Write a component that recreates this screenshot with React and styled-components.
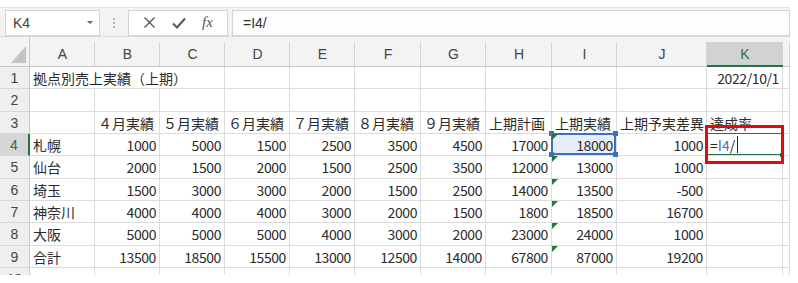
import React from 'react';
import styled, { createGlobalStyle, css } from 'styled-components';

const GlobalStyle = createGlobalStyle`
  body {
    margin: 0;
    background: #ffffff;
    font-family: "Noto Sans CJK JP", "Noto Sans", sans-serif;
  }
`;

const colWidths = [30, 65, 65, 65, 65, 65, 66, 65, 66, 65, 90, 76, 7];
const rowHeights = [22, 23, 22, 22, 23, 22, 22, 23, 22, 22];
const letters = ['A', 'B', 'C', 'D', 'E', 'F', 'G', 'H', 'I', 'J', 'K', ''];

const rows = [
  ['札幌', 1000, 5000, 1500, 2500, 3500, 4500, 17000, 18000, 1000],
  ['仙台', 2000, 1500, 2000, 1500, 2500, 3500, 12000, 13000, 1000],
  ['埼玉', 1500, 3000, 3000, 2000, 1500, 2500, 14000, 13500, -500],
  ['神奈川', 4000, 4000, 4000, 3000, 2000, 1500, 1800, 18500, 16700],
  ['大阪', 5000, 5000, 5000, 4000, 3000, 2000, 23000, 24000, 1000],
  ['合計', 13500, 18500, 15500, 13000, 12500, 14000, 67800, 87000, 19200]
];

const headings = ['', '４月実績', '５月実績', '６月実績', '７月実績', '８月実績', '９月実績', '上期計画', '上期実績', '上期予実差異', '達成率'];

const Page = styled.div`
  width: 790px;
  padding-top: 7px;
`;

const Toolbar = styled.div`
  display: flex;
  align-items: center;
  height: 30px;
  box-sizing: border-box;
  background: #f3f3f3;
  border-top: 1px solid #e4e4e4;
  border-bottom: 1px solid #dadada;
  padding: 2px 0 1px 5px;
`;

const NameBox = styled.div`
  display: flex;
  align-items: center;
  justify-content: space-between;
  width: 95px;
  height: 26px;
  box-sizing: border-box;
  background: #ffffff;
  border: 1px solid #d4d4d4;
  padding: 0 6px 0 7px;
  font-family: "Liberation Sans", Arial, sans-serif;
  font-size: 14px;
  color: #444;
`;

const Caret = styled.span`
  width: 0;
  height: 0;
  border-left: 3px solid transparent;
  border-right: 3px solid transparent;
  border-top: 3px solid #666;
`;

const Dots = styled.div`
  display: flex;
  flex-direction: column;
  gap: 2px;
  width: 28px;
  align-items: center;
  span {
    width: 2px;
    height: 2px;
    background: #b8b8b8;
  }
`;

const FxBox = styled.div`
  display: flex;
  align-items: center;
  justify-content: space-around;
  width: 100px;
  height: 26px;
  box-sizing: border-box;
  background: #ffffff;
  border: 1px solid #d4d4d4;
  padding: 0 6px;
  color: #555;
`;

const FxText = styled.span`
  font-family: "Liberation Serif", "Times New Roman", serif;
  font-style: italic;
  font-size: 15px;
  color: #555;
`;

const FormulaInput = styled.div`
  flex: 1;
  margin-left: 4px;
  height: 26px;
  box-sizing: border-box;
  background: #fdfdfd;
  border: 1px solid #d4d4d4;
  padding-left: 10px;
  display: flex;
  align-items: center;
  font-family: "Liberation Sans", Arial, sans-serif;
  font-size: 14px;
  color: #333;
`;

const Sheet = styled.div`
  height: 238px;
  overflow: hidden;
  background: #f3f3f3;
`;

const Grid = styled.div`
  display: grid;
  grid-template-columns: ${colWidths.map((w) => w + 'px').join(' ')};
  grid-template-rows: 30px ${rowHeights.map((h) => h + 'px').join(' ')};
`;

const Corner = styled.div`
  position: relative;
  background: #f3f3f3;
  border-right: 1px solid #c8c8c8;
  border-bottom: 1px solid #c8c8c8;
  &::after {
    content: '';
    position: absolute;
    right: 3px;
    bottom: 3px;
    border-left: 15px solid transparent;
    border-bottom: 17px solid #c4c4c4;
  }
`;

const ColHead = styled.div`
  position: relative;
  display: flex;
  align-items: center;
  justify-content: center;
  padding-top: 5px;
  box-sizing: border-box;
  background: #f3f3f3;
  border-bottom: 1px solid #c8c8c8;
  font-family: "Liberation Sans", Arial, sans-serif;
  font-size: 14px;
  color: #444;
  &::after {
    content: '';
    position: absolute;
    right: 0;
    top: 5px;
    bottom: 0;
    width: 1px;
    background: #d4d4d4;
  }
  ${(p) =>
    p.$active &&
    css`
      background: linear-gradient(#f3f3f3 5px, #d2d2d2 5px);
      border-bottom: 2px solid #217346;
      color: #217346;
    `}
`;

const RowHead = styled.div`
  display: flex;
  align-items: center;
  justify-content: center;
  box-sizing: border-box;
  background: #efefef;
  border-right: 1px solid #c8c8c8;
  border-bottom: 1px solid #d8d8d8;
  font-family: "Liberation Sans", Arial, sans-serif;
  font-size: 14px;
  color: #444;
  ${(p) =>
    p.$active &&
    css`
      background: #d6d6d6;
      border-right: 2px solid #217346;
      color: #217346;
    `}
`;

const Cell = styled.div`
  position: relative;
  display: flex;
  align-items: center;
  justify-content: ${(p) => (p.$num ? 'flex-end' : 'flex-start')};
  box-sizing: border-box;
  padding: 0 3px 0 3px;
  background: ${(p) => (p.$picked ? '#e8eef9' : '#ffffff')};
  border-right: 1px solid #dcdcdc;
  border-bottom: 1px solid #dcdcdc;
  font-size: 14px;
  letter-spacing: ${(p) => (p.$num ? '-0.4px' : '0')};
  color: #2b2b2b;
  white-space: nowrap;
  overflow: visible;
  ${(p) => p.$span && css`grid-column: span ${p.$span};`}
`;

const ErrorMark = styled.span`
  position: absolute;
  z-index: 3;
  left: 0;
  top: 0;
  border-right: 6px solid transparent;
  border-top: 6px solid #1e7b34;
`;

const RefFrame = styled.span`
  position: absolute;
  z-index: 2;
  left: -1px;
  top: -1px;
  right: 0;
  bottom: 0;
  border: 2px solid #3f6fc6;
  pointer-events: none;
`;

const Handle = styled.span`
  position: absolute;
  width: 5px;
  height: 5px;
  background: #3f6fc6;
  ${(p) => (p.$top ? 'top: -4px;' : 'bottom: -4px;')}
  ${(p) => (p.$left ? 'left: -4px;' : 'right: -4px;')}
`;

const EditFrame = styled.span`
  position: absolute;
  z-index: 2;
  left: -1px;
  top: -1px;
  right: 0;
  bottom: 0;
  border: 1px solid #217346;
  &::after {
    content: '';
    position: absolute;
    right: -3px;
    bottom: -3px;
    width: 4px;
    height: 4px;
    background: #217346;
  }
`;

const RedBox = styled.span`
  position: absolute;
  z-index: 4;
  left: -2px;
  top: -9px;
  width: 79px;
  height: 39px;
  box-sizing: border-box;
  border: 3px solid #e8080a;
`;

const RefText = styled.span`
  color: #3f6fc6;
`;

const Cursor = styled.span`
  display: inline-block;
  width: 1px;
  height: 17px;
  margin-left: 2px;
  background: #222;
`;

const CrossIcon = () => (
  <svg width="13" height="13" viewBox="0 0 13 13">
    <path d="M1.5 1.5 L11.5 11.5 M11.5 1.5 L1.5 11.5" stroke="#555" strokeWidth="1.4" fill="none" />
  </svg>
);

const CheckIcon = () => (
  <svg width="14" height="12" viewBox="0 0 14 12">
    <path d="M1 6.5 L5 10.5 L13 1.5" stroke="#555" strokeWidth="2" fill="none" />
  </svg>
);

function DataRow({ index, values }) {
  const rowNo = index + 4;
  const active = rowNo === 4;
  return (
    <>
      <RowHead $active={active}>{rowNo}</RowHead>
      {values.map((v, i) => {
        const isI = i === 8;
        return (
          <Cell key={i} $num={i > 0} $picked={active && isI}>
            {isI && <ErrorMark />}
            {active && isI && (
              <RefFrame>
                <Handle $top $left />
                <Handle $top />
                <Handle $left />
                <Handle />
              </RefFrame>
            )}
            {v}
          </Cell>
        );
      })}
      {active ? (
        <Cell>
          <EditFrame />
          <RedBox />
          =<RefText>I4</RefText>/<Cursor />
        </Cell>
      ) : (
        <Cell />
      )}
      <Cell />
    </>
  );
}

function EmptyRow({ no }) {
  return (
    <>
      <RowHead>{no}</RowHead>
      {letters.map((l, i) => (
        <Cell key={i} />
      ))}
    </>
  );
}

export default function App() {
  return (
    <Page>
      <GlobalStyle />
      <Toolbar>
        <NameBox>
          K4
          <Caret />
        </NameBox>
        <Dots>
          <span />
          <span />
          <span />
        </Dots>
        <FxBox>
          <CrossIcon />
          <CheckIcon />
          <FxText>fx</FxText>
        </FxBox>
        <FormulaInput>=I4/</FormulaInput>
      </Toolbar>
      <Sheet>
        <Grid>
          <Corner />
          {letters.map((l, i) => (
            <ColHead key={i} $active={l === 'K'}>
              {l}
            </ColHead>
          ))}

          <RowHead>1</RowHead>
          <Cell $span={3}>拠点別売上実績（上期）</Cell>
          {letters.slice(3, 10).map((l) => (
            <Cell key={l} />
          ))}
          <Cell $num>2022/10/1</Cell>
          <Cell />

          <EmptyRow no={2} />

          <RowHead>3</RowHead>
          {headings.map((h, i) => (
            <Cell key={i}>{h}</Cell>
          ))}
          <Cell />

          {rows.map((r, i) => (
            <DataRow key={i} index={i} values={r} />
          ))}

          <EmptyRow no={10} />
        </Grid>
      </Sheet>
    </Page>
  );
}
